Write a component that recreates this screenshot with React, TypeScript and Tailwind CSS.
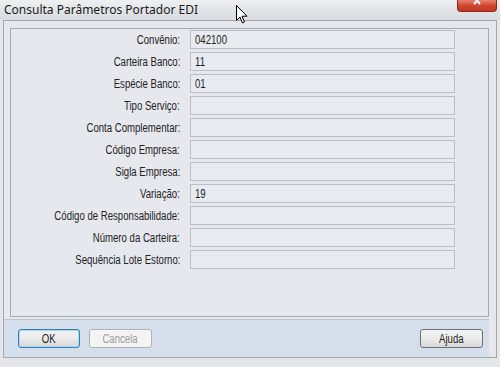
import React from 'react'

const rows = [
  { label: 'Convênio:', value: '042100' },
  { label: 'Carteira Banco:', value: '11' },
  { label: 'Espécie Banco:', value: '01' },
  { label: 'Tipo Serviço:', value: '' },
  { label: 'Conta Complementar:', value: '' },
  { label: 'Código Empresa:', value: '' },
  { label: 'Sigla Empresa:', value: '' },
  { label: 'Variação:', value: '19' },
  { label: 'Código de Responsabilidade:', value: '' },
  { label: 'Número da Carteira:', value: '' },
  { label: 'Sequência Lote Estorno:', value: '' },
]

const uiFont = "font-['Liberation_Sans',sans-serif]"

export default function App() {
  return (
    <div className="relative w-[500px] h-[367px] overflow-hidden bg-[#e4e6ea] flex flex-col">
      {/* Title bar */}
      <div className="h-[20px] shrink-0 flex items-center pl-[4px] bg-gradient-to-b from-[#eef0f2] via-[#e2e4e7] to-[#d9dce0]">
        <span className="text-[12px] text-[#1b1b1b] font-['Noto_Sans',sans-serif] leading-none">
          Consulta Parâmetros Portador EDI
        </span>
      </div>

      {/* Close button */}
      <div className="absolute top-0 left-[457px] w-[40px] h-[12px] rounded-b-[4px] border border-t-0 border-[#8e2a1e] bg-gradient-to-b from-[#e7826f] via-[#d0462f] to-[#c23a24] flex justify-center overflow-hidden">
        <svg width="10" height="6" viewBox="0 0 10 6">
          <path d="M1 -3 L7 4 M7 -3 L1 4" stroke="#fff" strokeWidth="2" transform="translate(1 0)" />
        </svg>
      </div>

      {/* Window body */}
      <div className={`ml-[3px] mr-[3px] h-[338px] border border-[#a3a8b0] bg-[#e6e8ee] flex flex-col ${uiFont}`}>
        <div className="mt-[7px] ml-[6px] mr-[7px] h-[289px] border border-[#a4a9b2] pt-[1px] flex flex-col gap-[3px]">
          {rows.map((r) => (
            <div key={r.label} className="flex items-center h-[19px]">
              <div className="w-[170px] flex justify-end pr-[1px]">
                <span className="inline-block origin-right scale-x-[0.8] whitespace-nowrap text-[12px] text-[#222] leading-none">
                  {r.label}
                </span>
              </div>
              <div className="ml-[9px] w-[265px] h-[19px] border border-[#b9bdc4] bg-[#e8eaef] flex items-center pl-[4px]">
                <span className="inline-block origin-left scale-x-[0.8] text-[12px] text-[#1e1e1e] leading-none">
                  {r.value}
                </span>
              </div>
            </div>
          ))}
        </div>

        {/* Button bar */}
        <div className="mt-[2px] mr-[7px] flex-1 bg-[#d5deeb] border-t border-[#bcc4d0] flex items-center justify-between pl-[14px] pr-[6px]">
          <div className="flex gap-[9px]">
            <button className="w-[62px] h-[19px] rounded-[3px] border border-[#3c7fb1] bg-gradient-to-b from-[#f2f2f2] via-[#ebebeb] to-[#d6d6d6] text-[#1e1e1e] shadow-[inset_0_0_0_1px_#a6d8f4] flex items-center justify-center">
              <span className="inline-block scale-x-[0.8] text-[12px] leading-none">OK</span>
            </button>
            <button className="w-[63px] h-[19px] rounded-[3px] border border-[#adb2b5] bg-[#f4f4f4] text-[#9a9a9a] flex items-center justify-center">
              <span className="inline-block scale-x-[0.8] text-[12px] leading-none">Cancela</span>
            </button>
          </div>
          <button className="w-[63px] h-[19px] rounded-[3px] border border-[#707070] bg-gradient-to-b from-[#f4f4f4] via-[#ebebeb] to-[#d9d9d9] text-[#1e1e1e] flex items-center justify-center">
            <span className="inline-block scale-x-[0.8] text-[12px] leading-none">Ajuda</span>
          </button>
        </div>
      </div>

      {/* Mouse cursor */}
      <svg className="absolute left-[236px] top-[5px]" width="12" height="19" viewBox="0 0 12 19">
        <path d="M0.5 0.5 L0.5 15.5 L4 12 L6.5 18 L8.5 17 L6 11.2 L11 11.2 Z" fill="#fff" stroke="#000" strokeWidth="1" strokeLinejoin="round" />
      </svg>
    </div>
  )
}
